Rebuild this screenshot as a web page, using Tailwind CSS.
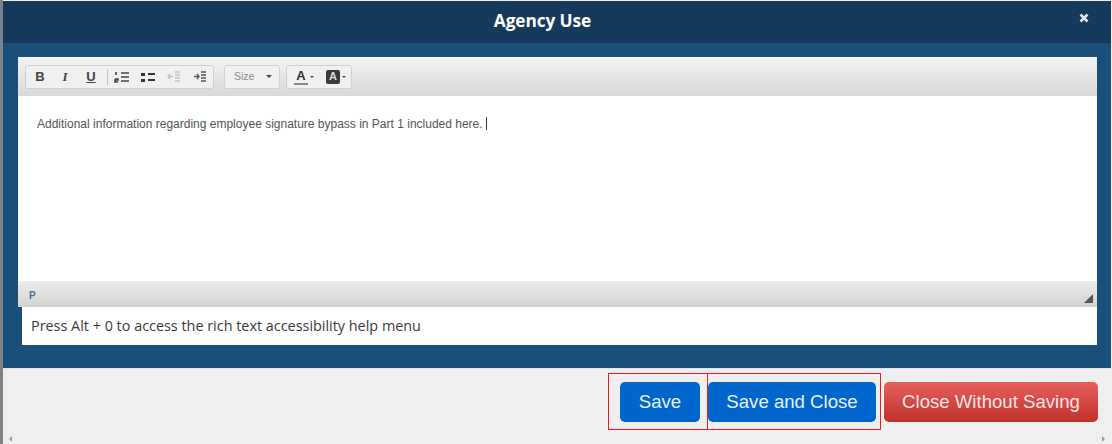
<!DOCTYPE html>
<html lang="en">
  <head>
    <meta charset="UTF-8" />
    <title>Agency Use</title>
    <script src="https://cdn.jsdelivr.net/npm/@tailwindcss/browser@4"></script>
  </head>
  <body class="w-[1112px] h-[444px] overflow-hidden bg-[#efefef] font-['Liberation_Sans',sans-serif]">
    <div class="relative flex flex-col h-[444px] pt-[1px] pr-[1px] border-l-[3px] border-[#7d8287] bg-[#efefef]">
      <!-- Header -->
      <div class="relative flex items-center justify-center h-[42px] shrink-0 pr-[29px] pb-[3px] bg-[#163a5c]">
        <h1 class="font-['Open_Sans',sans-serif] text-[17.3px] font-bold tracking-[-0.1px] text-white">Agency Use</h1>
        <svg class="absolute right-[22px] top-[12px] w-[10px] h-[10px]" viewBox="0 0 10 10">
          <path d="M1.5 1.5 8.5 8.5M8.5 1.5 1.5 8.5" stroke="#dfe5ea" stroke-width="2.6" />
        </svg>
      </div>

      <!-- Blue panel -->
      <div class="h-[325px] shrink-0 bg-[#194f78] pt-[14px] pl-[15px] pr-[14px]">
        <!-- Toolbar -->
        <div class="flex items-center gap-[6px] h-[39px] pl-[7px] bg-gradient-to-b from-[#f3f3f3] to-[#d9d9d9]">
          <div class="flex items-center h-[24px] w-[189px] pl-[2px] rounded-[3px] border border-[#d0d0d0] bg-[#f0f0f0] text-[#444]">
            <span class="w-[24px] text-center text-[13px] font-bold">B</span>
            <span class="w-[26px] text-center text-[13px] font-bold italic font-['Liberation_Serif',serif]">I</span>
            <span class="w-[26px] text-center text-[13px] font-bold underline">U</span>
            <span class="w-px h-[16px] ml-[3px] mr-[6px] bg-[#c4c4c4]"></span>
            <svg class="w-[16px] h-[12px] mr-[10px]" viewBox="0 0 16 12" stroke="#444" stroke-width="1.6" fill="none">
              <path d="M7 2h8M7 6h8M7 10h8M2 1v3M1 8h3v1H1v2h3" />
            </svg>
            <svg class="w-[16px] h-[12px] mr-[11px]" viewBox="0 0 16 12" fill="#333">
              <rect x="1" y="2" width="4" height="3" /><rect x="8" y="2" width="7" height="2" />
              <rect x="1" y="8" width="4" height="3" /><rect x="8" y="8" width="7" height="2" />
            </svg>
            <svg class="w-[14px] h-[12px] mr-[12px]" viewBox="0 0 14 12" stroke="#c2c2c2" stroke-width="1.3" fill="none">
              <path d="M8 1h5M8 4h5M8 7h5M8 10h5M1 5.5h5M3 3 1 5.5 3 8" />
            </svg>
            <svg class="w-[14px] h-[12px]" viewBox="0 0 14 12" stroke="#555" stroke-width="1.3" fill="none">
              <path d="M8 1h5M8 4h5M8 7h5M8 10h5M1 5.5h5M4 3l2 2.5L4 8" />
            </svg>
          </div>
          <div class="flex items-center h-[24px] w-[56px] ml-[4px] pl-[9px] rounded-[3px] border border-[#d0d0d0] bg-[#f0f0f0] text-[10.5px] text-[#8b8b8b]">
            Size
            <span class="ml-[12px] border-x-[3px] border-t-[3px] border-x-transparent border-t-[#444]"></span>
          </div>
          <div class="flex items-center h-[24px] w-[66px] pl-[7px] rounded-[3px] border border-[#d0d0d0] bg-[#f0f0f0]">
            <span class="w-[14px] text-center text-[13px] font-bold leading-[15px] text-[#333] border-b-2 border-[#888]">A</span>
            <span class="ml-[2px] border-x-[2px] border-t-[2px] border-x-transparent border-t-[#444]"></span>
            <span class="ml-[12px] flex items-center justify-center w-[14px] h-[14px] rounded-[2px] bg-[#3a3a3a] text-[11px] font-bold text-[#ddd]">A</span>
            <span class="ml-[2px] border-x-[2px] border-t-[2px] border-x-transparent border-t-[#444]"></span>
          </div>
        </div>

        <!-- Editing area -->
        <div class="h-[185px] bg-white pl-[19px] pt-[20px] text-[12px] leading-[16px] text-[#555]">
          Additional information regarding employee signature bypass in Part 1 included here.<span class="inline-block w-px h-[13px] ml-[3px] align-[-2px] bg-[#333]"></span>
        </div>

        <!-- Status bar -->
        <div class="relative flex items-center h-[26px] pl-[11px] pt-[3px] bg-gradient-to-b from-[#ececec] to-[#d2d3d1] text-[10px] font-bold text-[#3f6f9f]">
          P
          <svg class="absolute right-[4px] bottom-[4px] w-[9px] h-[9px]" viewBox="0 0 9 9"><path d="M9 0v9H0z" fill="#555" /></svg>
        </div>

        <!-- Help text -->
        <div class="flex items-center h-[38px] ml-[4px] pl-[9px] bg-white font-['Open_Sans',sans-serif] text-[14.4px] text-[#3a3a3a]">
          Press Alt + 0 to access the rich text accessibility help menu
        </div>
      </div>

      <!-- Footer buttons -->
      <div class="flex justify-end gap-[8px] pt-[13px] pr-[13px] border-t border-[#dfe5ea] text-[18.6px]">
        <button class="w-[80px] h-[40px] rounded-[5px] bg-[#0066cc] text-[#e8f1fa]">Save</button>
        <button class="w-[168px] h-[40px] rounded-[5px] bg-[#0066cc] text-[#e8f1fa]">Save and Close</button>
        <button class="w-[214px] h-[40px] rounded-[5px] bg-gradient-to-b from-[#e65f5c] to-[#bf302b] text-[#f5e6e5]">Close Without Saving</button>
      </div>

      <!-- Red annotation boxes -->
      <div class="absolute left-[605px] top-[373px] w-[100px] h-[57px] border-[1.5px] border-[#ee1c25]"></div>
      <div class="absolute left-[704px] top-[373px] w-[174px] h-[57px] border-[1.5px] border-[#ee1c25]"></div>

      <!-- Scrollbar arrows -->
      <span class="absolute left-[6px] bottom-[2px] border-y-[3px] border-r-[3px] border-y-transparent border-r-[#999]"></span>
      <span class="absolute right-[7px] bottom-[2px] border-y-[3px] border-l-[3px] border-y-transparent border-l-[#999]"></span>
    </div>
  </body>
</html>
